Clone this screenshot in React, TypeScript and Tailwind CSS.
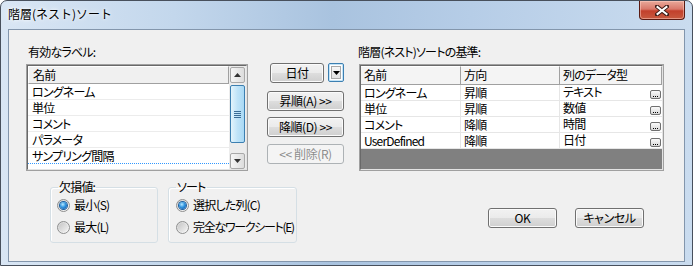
import React from "react";

const jp =
  "font-['Noto_Sans_CJK_JP','Noto_Sans_CJK_SC',sans-serif] [font-feature-settings:'palt']";

const btn =
  "h-[20px] rounded-[3px] border border-[#707070] bg-[linear-gradient(#f2f2f2_0%,#ebebeb_48%,#dddddd_52%,#cfcfcf_100%)] shadow-[inset_0_0_0_1px_#fbfbfb] flex items-center justify-center text-[12px] leading-none text-black whitespace-nowrap tracking-[-0.4px]";

function Radio({ checked }: { checked: boolean }) {
  return (
    <span className="w-[13px] h-[13px] rounded-full border border-[#8e8f8f] bg-[linear-gradient(135deg,#d4d4d4,#fbfbfb)] flex items-center justify-center shrink-0">
      {checked ? (
        <span className="w-[7px] h-[7px] rounded-full bg-[radial-gradient(circle_at_40%_35%,#b8e8ff_0%,#2f95e0_45%,#0c4a9c_100%)] shadow-[0_0_0_1px_#1d5f9e]" />
      ) : (
        <span className="w-[9px] h-[9px] rounded-full bg-[linear-gradient(135deg,#c6c6c6,#f2f2f2)]" />
      )}
    </span>
  );
}

function RadioRow({ checked, label, tight }: { checked: boolean; label: string; tight?: boolean }) {
  return (
    <div className="flex items-center h-[16px] whitespace-nowrap">
      <Radio checked={checked} />
      <span className={`ml-[4px] text-[12px] leading-[16px] text-black ${tight ? "tracking-[-1.3px]" : ""}`}>{label}</span>
    </div>
  );
}

function DotsBtn() {
  return (
    <span className="w-[11px] h-[9px] rounded-[2px] border border-[#707070] bg-[linear-gradient(#fafafa,#d8d8d8)] flex items-end justify-center gap-[1px] pb-[1px] shrink-0">
      <span className="w-[1px] h-[1px] bg-black" />
      <span className="w-[1px] h-[1px] bg-black" />
      <span className="w-[1px] h-[1px] bg-black" />
    </span>
  );
}

const listRows = ["ロングネーム", "単位", "コメント", "パラメータ", "サンプリング間隔"];

const sortRows = [
  ["ロングネーム", "昇順", "テキスト"],
  ["単位", "昇順", "数値"],
  ["コメント", "降順", "時間"],
  ["UserDefined", "降順", "日付"],
];

export default function App() {
  return (
    <div className={`${jp} w-[693px] h-[266px] flex flex-col border border-[#48505c] rounded-t-[7px] bg-[linear-gradient(90deg,#d9e6f4_0%,#c3d7ec_25%,#a9c3df_48%,#b6cde7_68%,#cadcef_100%)] overflow-hidden`}>
      {/* Title bar */}
      <div className="h-[28px] flex justify-between shrink-0">
        <div className="pl-[7px] pt-[5px] text-[12px] leading-[16px] text-black [font-feature-settings:normal] [text-shadow:0_0_6px_#ffffff,0_0_3px_#ffffff]">
          階層(ネスト)ソート
        </div>
        <div className="mr-[7px] mt-0 w-[46px] h-[19px] rounded-b-[4px] border border-t-0 border-[#5a1a12] bg-[linear-gradient(#e9a99a_0%,#d9786a_45%,#c2402c_55%,#c75a3f_100%)] shadow-[inset_0_0_0_1px_rgba(255,210,200,0.5)] flex items-center justify-center">
          <svg width="14" height="11" viewBox="0 0 14 11">
            <path d="M2 1.5 L12 9.5 M12 1.5 L2 9.5" stroke="#3b1b16" strokeWidth="4" strokeLinecap="square" />
            <path d="M2.5 2 L11.5 9 M11.5 2 L2.5 9" stroke="#ffffff" strokeWidth="2" strokeLinecap="square" />
          </svg>
        </div>
      </div>

      {/* Client area */}
      <div className="mx-[7px] h-[233px] border border-[#8396ac] bg-[#f0f0f0] flex flex-col text-black tracking-[-0.8px]">
        {/* Top row */}
        <div className="flex pt-[14px] pl-[17px]">
          {/* Left list */}
          <div className="w-[222px] flex flex-col">
            <div className="pl-[2px] h-[16px] text-[12px] leading-[16px]">有効なラベル:</div>
            <div className="mt-[4px] h-[107px] border border-[#a0a0a0] flex">
              <div className="flex-1 flex border border-[#696969] border-r-[#e3e3e3] border-b-[#e3e3e3] bg-white">
                <div className="flex-1 flex flex-col">
                  <div className="h-[18px] bg-[#f0f0f0] border border-[#a0a0a0] border-t-white border-l-white pl-[4px] text-[12px] leading-[16px]">
                    名前
                  </div>
                  {listRows.map((r, i) => (
                    <div
                      key={r}
                      className={`h-[16px] pl-[4px] text-[12px] leading-[15px] border-b ${i === listRows.length - 1 ? "border-dotted border-[#3399ff]" : "border-[#ececec]"}`}
                    >
                      {r}
                    </div>
                  ))}
                </div>
                {/* Scrollbar */}
                <div className="w-[17px] bg-[#ececec] flex flex-col items-center pt-[1px]">
                  <div className="w-[15px] h-[16px] border border-[#a8a8a8] rounded-[2px] bg-[linear-gradient(90deg,#f6f6f6,#dcdcdc)] flex items-center justify-center">
                    <svg width="7" height="4" viewBox="0 0 7 4"><path d="M0 4 L3.5 0 L7 4 Z" fill="#333" /></svg>
                  </div>
                  <div className="mt-[2px] w-[15px] h-[58px] border border-[#3c7fb1] rounded-[2px] bg-[linear-gradient(90deg,#e3f4fc,#bfe3f8_50%,#a9d9f5)] flex flex-col items-center justify-center gap-[1px]">
                    <span className="w-[7px] h-[1px] bg-[#3c6d96]" />
                    <span className="w-[7px] h-[1px] bg-[#3c6d96]" />
                    <span className="w-[7px] h-[1px] bg-[#3c6d96]" />
                    <span className="w-[7px] h-[1px] bg-[#3c6d96]" />
                  </div>
                  <div className="flex-1" />
                  <div className="w-[15px] h-[16px] border border-[#a8a8a8] rounded-[2px] bg-[linear-gradient(90deg,#f6f6f6,#dcdcdc)] flex items-center justify-center">
                    <svg width="7" height="4" viewBox="0 0 7 4"><path d="M0 0 L3.5 4 L7 0 Z" fill="#333" /></svg>
                  </div>
                </div>
              </div>
            </div>
          </div>

          {/* Middle buttons */}
          <div className="ml-[19px] w-[77px] pt-[19px] flex flex-col">
            <div className="flex h-[19px]">
              <div className={`${btn} ml-[3px] w-[54px] h-[19px]`}>日付</div>
              <div className="ml-[4px] w-[16px] h-[19px] rounded-[2px] border border-[#3c7fb1] bg-white flex items-center justify-center shadow-[inset_0_0_0_1px_#c5e4f7]">
                <div className="w-[10px] h-[13px] border border-[#a9a9a9] bg-[linear-gradient(#f7f7f7,#e2e2e2)] flex items-center justify-center">
                  <svg width="7" height="4" viewBox="0 0 7 4"><path d="M0 0 L3.5 4 L7 0 Z" fill="#000" /></svg>
                </div>
              </div>
            </div>
            <div className={`${btn} mt-[9px] w-[77px]`}>昇順(A) &gt;&gt;</div>
            <div className={`${btn} mt-[6px] w-[77px]`}>降順(D) &gt;&gt;</div>
            <div className="mt-[7px] w-[77px] h-[20px] rounded-[3px] border border-[#adb2b5] bg-[#f4f4f4] flex items-center justify-center text-[12px] leading-none text-[#8d8d8d] whitespace-nowrap tracking-[-0.4px]">
              &lt;&lt; 削除(R)
            </div>
          </div>

          {/* Right table */}
          <div className="ml-[14px] flex flex-col">
            <div className="h-[16px] text-[12px] leading-[16px]">階層(ネスト)ソートの基準:</div>
            <div className="mt-[4px] ml-[1px] w-[305px] h-[107px] border border-[#a0a0a0]">
              <div className="h-full flex flex-col border border-[#696969] border-r-[#e3e3e3] border-b-[#e3e3e3] bg-white">
                <div className="flex h-[19px] shrink-0">
                  {["名前", "方向", "列のデータ型"].map((h, i) => (
                    <div
                      key={h}
                      className={`${i === 0 ? "w-[100px]" : i === 1 ? "w-[99px]" : "flex-1"} h-[19px] bg-[#f4f4f4] border-b border-r border-[#a0a0a0] border-t border-t-white pl-[3px] text-[12px] leading-[16px]`}
                    >
                      {h}
                    </div>
                  ))}
                </div>
                {sortRows.map((r) => (
                  <div key={r[0]} className="flex h-[16px] shrink-0">
                    <div className="w-[100px] border-b border-r border-[#e6e6e6] pl-[3px] text-[12px] leading-[15px]">{r[0]}</div>
                    <div className="w-[99px] border-b border-r border-[#e6e6e6] pl-[3px] text-[12px] leading-[15px]">{r[1]}</div>
                    <div className="flex-1 border-b border-[#e6e6e6] pl-[3px] pr-[1px] text-[12px] leading-[15px] flex justify-between items-end pb-[1px]">
                      <span className="leading-[14px]">{r[2]}</span>
                      <DotsBtn />
                    </div>
                  </div>
                ))}
                <div className="flex-1 bg-[#808080]" />
              </div>
            </div>
          </div>
        </div>

        {/* Bottom row */}
        <div className="flex mt-[9px] pl-[41px] items-start">
          <fieldset className="min-w-0 shrink-0 w-[108px] h-[63px] border border-[#d5dfe5] rounded-[3px] shadow-[inset_1px_1px_0_#ffffff] px-[6px]">
            <legend className="ml-[1px] px-[1px] text-[12px] leading-[14px]">欠損値:</legend>
            <div className="pt-[3px]">
              <RadioRow checked label="最小(S)" />
              <div className="mt-[6px]">
                <RadioRow checked={false} label="最大(L)" />
              </div>
            </div>
          </fieldset>
          <fieldset className="min-w-0 shrink-0 ml-[10px] w-[129px] h-[63px] border border-[#d5dfe5] rounded-[3px] shadow-[inset_1px_1px_0_#ffffff] px-[7px]">
            <legend className="ml-[0px] px-[1px] text-[12px] leading-[14px]">ソート</legend>
            <div className="pt-[3px]">
              <RadioRow checked label="選択した列(C)" />
              <div className="mt-[6px]">
                <RadioRow checked={false} label="完全なワークシート(E)" tight />
              </div>
            </div>
          </fieldset>
          <div className={`${btn} shrink-0 ml-[191px] mt-[28px] w-[69px]`}>OK</div>
          <div className={`${btn} shrink-0 ml-[18px] mt-[28px] w-[69px]`}>キャンセル</div>
        </div>
      </div>
    </div>
  );
}
